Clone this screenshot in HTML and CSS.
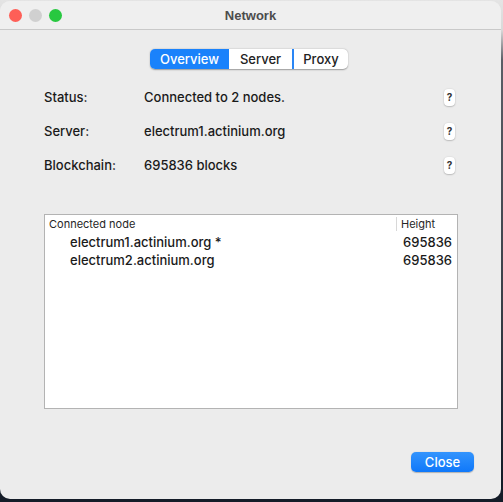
FILE: index.html
```html
<!DOCTYPE html>
<html>
<head>
<meta charset="utf-8">
<link rel="stylesheet" href="styles.css">
</head>
<body>
<div class="window">
  <div class="titlebar">
    <div class="lights">
      <span class="light red"></span>
      <span class="light gray"></span>
      <span class="light green"></span>
    </div>
    <div class="title">Network</div>
  </div>
  <div class="content">
    <div class="tabs-wrap">
      <div class="tabs">
        <div class="tab active">Overview</div>
        <div class="tab">Server</div>
        <div class="tab focusline">Proxy</div>
      </div>
    </div>
    <div class="rows">
      <div class="row"><span class="label">Status:</span><span class="value">Connected to 2 nodes.</span><span class="help">?</span></div>
      <div class="row"><span class="label">Server:</span><span class="value">electrum1.actinium.org</span><span class="help">?</span></div>
      <div class="row"><span class="label">Blockchain:</span><span class="value">695836 blocks</span><span class="help">?</span></div>
    </div>
    <div class="table">
      <div class="thead">
        <div class="th c1">Connected node</div>
        <div class="th c2">Height</div>
      </div>
      <div class="tr"><span class="node">electrum1.actinium.org *</span><span class="h">695836</span></div>
      <div class="tr"><span class="node">electrum2.actinium.org</span><span class="h">695836</span></div>
    </div>
    <div class="footer">
      <button class="close">Close</button>
    </div>
  </div>
</div>
</body>
</html>
```

FILE: styles.css
```css
html, body {
  margin: 0;
  padding: 0;
}
body {
  width: 503px;
  height: 502px;
  background: linear-gradient(to bottom, #e4e4e4 0px, #d9d9d9 30px, #5a5e66 60px, #3a3f48 300px, #141c28 480px);
  font-family: Inter, "Liberation Sans", Arial, sans-serif;
  font-size: 13px;
  font-weight: 500;
  color: #1a1a1a;
  overflow: hidden;
}
.window {
  margin-top: 1px;
  width: 501px;
  height: 498px;
  background: #ececec;
  border-radius: 10px;
  overflow: hidden;
  display: flex;
  flex-direction: column;
}
.titlebar {
  height: 28px;
  background: #efefef;
  border-bottom: 1px solid #c9c9c9;
  display: flex;
  align-items: center;
  position: relative;
}
.lights {
  display: flex;
  gap: 7px;
  padding-left: 9px;
}
.light {
  width: 13px;
  height: 13px;
  border-radius: 50%;
  display: block;
}
.light.red { background: #fe5f57; }
.light.gray { background: #d0d0d0; }
.light.green { background: #28c840; }
.title {
  position: absolute;
  left: 0;
  right: 0;
  text-align: center;
  font-family: "Liberation Sans", Arial, sans-serif;
  font-weight: bold;
  font-size: 13px;
  color: #4c4c4c;
  top: 7px;
}
.content {
  flex: 1;
  display: flex;
  flex-direction: column;
  padding: 0 43px 0 44px;
}
.tabs-wrap {
  display: flex;
  justify-content: center;
  margin-top: 19px;
  padding-right: 4px;
}
.tabs {
  display: flex;
  height: 20px;
  background: #fff;
  border-radius: 5px;
  box-shadow: 0 0.5px 1.5px rgba(0,0,0,0.35);
  overflow: hidden;
}
.tab {
  font-size: 13px;
  line-height: 20px;
  color: #222;
  text-align: center;
  padding: 0;
}
.tab.active {
  background: #1a82fb;
  color: #fff;
  width: 79px;
}
.tab:nth-child(2) { width: 63px; }
.tab.focusline {
  border-left: 2px solid #2a86f5;
  width: 54px;
}
.rows {
  margin-top: 11px;
  display: flex;
  flex-direction: column;
}
.row {
  height: 34px;
  display: flex;
  align-items: center;
}
.label {
  width: 100px;
}
.value {
  flex: 1;
}
.help {
  width: 11px;
  height: 17px;
  background: #fff;
  border-radius: 4px;
  box-shadow: 0 0.5px 1.5px rgba(0,0,0,0.35);
  font-size: 10px;
  font-weight: bold;
  line-height: 17px;
  text-align: center;
  color: #333;
  margin-right: 3px;
}
.table {
  margin-top: 32px;
  height: 193px;
  background: #fff;
  border: 1px solid #b3b3b3;
  display: flex;
  flex-direction: column;
}
.thead {
  height: 18px;
  display: flex;
  align-items: center;
  background: #fff;
  font-size: 11px;
  font-weight: 400;
  color: #262626;
}
.th.c1 {
  flex: 1;
  padding-left: 4px;
}
.th.c2 {
  width: 56px;
  padding-left: 4px;
  border-left: 1px solid #d8d8d8;
  line-height: 14px;
}
.tr {
  height: 18px;
  display: flex;
  align-items: center;
  padding: 0 5px 0 25px;
}
.node { flex: 1; }
.h { text-align: right; }
.footer {
  margin-top: 43px;
  display: flex;
  justify-content: flex-end;
}
.close {
  width: 63px;
  height: 20px;
  border: none;
  border-radius: 5px;
  background: linear-gradient(to bottom, #3394fd, #0f78fa);
  color: #fff;
  font-family: Inter, "Liberation Sans", Arial, sans-serif;
  font-size: 13px;
  font-weight: 500;
  padding: 0;
  margin-right: -16px;
  box-shadow: 0 0.5px 1px rgba(0,0,0,0.25);
}
```
